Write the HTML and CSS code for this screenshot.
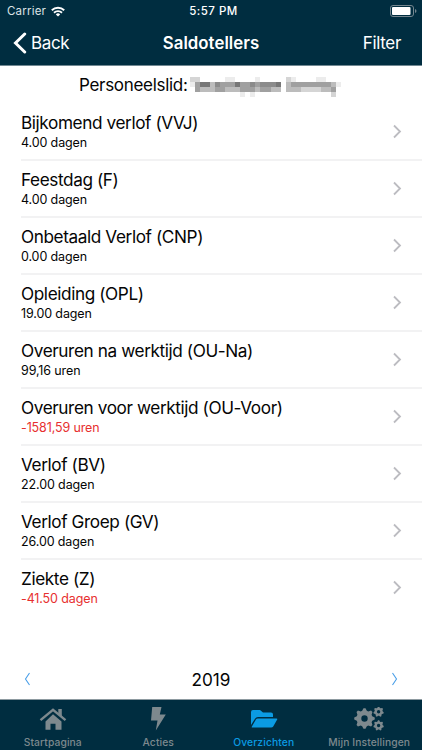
FILE: index.html
```html
<!DOCTYPE html>
<html lang="nl">
<head>
<meta charset="utf-8">
<title>Saldotellers</title>
<link rel="stylesheet" href="styles.css">
</head>
<body>
<header class="top">
  <div class="status">
    <div class="carrier"><span>Carrier</span>
      <svg width="14" height="11" viewBox="0 0 14 11"><g fill="none" stroke="#fff" stroke-width="1.9"><path d="M.8 4.2a9 9 0 0 1 12.4 0"/><path d="M3 6.7a5.8 5.8 0 0 1 8 0"/></g><path d="M7 10.6 4.8 8.4a3.2 3.2 0 0 1 4.4 0z" fill="#fff"/></svg>
    </div>
    <span class="clock">5:57 PM</span>
    <svg class="battery" width="27" height="12" viewBox="0 0 27 12"><rect x=".5" y=".5" width="23" height="11" rx="2.5" fill="none" stroke="#74868f"/><rect x="2" y="2" width="18.5" height="8" rx="1" fill="#fff"/><path d="M25 4v4q1.500-.6 1.500-2T25 4z" fill="#74868f"/></svg>
  </div>
  <nav class="bar">
    <a class="back"><svg width="14" height="22" viewBox="0 0 14 22"><path d="M11.700 2 2.500 11l9.200 9" fill="none" stroke="#fff" stroke-width="3" stroke-linecap="round" stroke-linejoin="miter"/></svg><span>Back</span></a>
    <h1>Saldotellers</h1>
    <a class="filter">Filter</a>
  </nav>
</header>
<main>
  <div class="person"><span class="label">Personeelslid:</span><svg class="mosaic" id="mosaic" width="156" height="20" viewBox="0 0 31 4" preserveAspectRatio="none" shape-rendering="crispEdges"></svg></div>
  <ul class="list" id="list"></ul>
  <div class="year">
    <svg width="7" height="14" viewBox="0 0 7 14"><path d="M5.500 1 1.500 7l4 6" fill="none" stroke="#4a9fe8" stroke-width="1.100"/></svg>
    <span>2019</span>
    <svg width="7" height="14" viewBox="0 0 7 14"><path d="M1.500 1l4 6-4 6" fill="none" stroke="#4a9fe8" stroke-width="1.100"/></svg>
  </div>
</main>
<footer class="tabs">
  <a class="tab"><svg width="28" height="24" viewBox="0 0 28 24"><path d="M14 7.300 22.500 14.500v8.200h-6v-6h-5v6h-5v-8.200z" fill="currentColor"/><path d="M1.500 13.200 14 2.800l12.500 10.400" fill="none" stroke="currentColor" stroke-width="2.400"/><path d="M19.300 2h3.500v8l-3.500-3z" fill="currentColor"/></svg><span>Startpagina</span></a>
  <a class="tab"><svg width="28" height="24" viewBox="0 0 28 24"><path d="M8.200 0h9.300l-1.700 7.500h6L11.800 23.500l1.700-10H7z" fill="currentColor"/></svg><span>Acties</span></a>
  <a class="tab active"><svg width="28" height="24" viewBox="0 0 28 24"><path d="M1 18V5q0-2 2-2h7l3 2.500h8q2 0 2 2V10H8q-2 0-3 1.700z" fill="currentColor"/><path d="M7.700 11.600h18.800q1.200 0 .7 1l-4 7q-.7 1-2 1H2.500q-1.200 0-.6-1l4-7q.6-1 1.800-1z" fill="currentColor"/></svg><span>Overzichten</span></a>
  <a class="tab"><svg width="30" height="24" viewBox="0 0 30 24" id="gears"></svg><span>Mijn Instellingen</span></a>
</footer>
<script src="app.js"></script>
</body>
</html>
```
FILE: styles.css
```css
* { box-sizing: border-box; }
body { margin: 0; width: 422px; height: 750px; display: flex; flex-direction: column; background: #fff; color: #050505; font-family: Inter, sans-serif; overflow: hidden; }
.top { height: 66px; background: #002d40; color: #fff; border-bottom: 1px solid #718892; flex: none; }
.status { height: 22px; display: grid; grid-template-columns: 1fr auto 1fr; align-items: center; padding: 0 5px 0 7px; }
.carrier { display: flex; align-items: center; gap: 5px; font-size: 11.5px; letter-spacing: .2px; color: #dbe2e5; }
.clock { font-size: 11.5px; font-weight: 500; letter-spacing: .5px; padding-left: 3px; }
.battery { justify-self: end; }
.bar { height: 42px; display: grid; grid-template-columns: 1fr auto 1fr; align-items: center; padding: 0 21px; font-size: 17px; letter-spacing: -.35px; }
.back { display: flex; align-items: center; gap: 4px; margin-left: -8px; }
h1 { margin: 0; font-size: 16.8px; font-weight: 600; letter-spacing: .05px; }
.filter { justify-self: end; }
main { flex: 1; display: flex; flex-direction: column; }
.person { display: flex; height: 38px; padding: 8px 0 0 79px; font-size: 17px; line-height: 23px; }
.label { width: 111px; letter-spacing: -.3px; }
.mosaic { margin: 3px 0 0; }
.list { margin: 0; padding: 0 0 0 21px; list-style: none; }
.row { height: 57px; border-bottom: 2px solid #f2f2f3; display: flex; justify-content: space-between; padding: 7px 20px 0 0; }
.name { font-size: 17.2px; line-height: 23px; letter-spacing: -.4px; white-space: nowrap; }
.value { font-size: 12.5px; line-height: 15px; letter-spacing: -.12px; margin-top: 1px; }
.negative { color: #e72f2f; }
.chev { margin-top: 13px; }
.row:last-child { border-bottom: 0; }
.year { margin-top: auto; height: 41px; display: flex; justify-content: space-between; padding: 0 24px; align-items: center; font-size: 17.2px; }
.year span { padding-top: 2px; }
.tabs { height: 51px; flex: none; border-top: 1px solid #8d9aa0; background: #002d40; display: grid; grid-template-columns: repeat(4, 1fr); color: #7d898e; }
.tab { display: flex; flex-direction: column; align-items: center; padding-top: 7px; font-size: 10.3px; font-weight: 500; line-height: 13px; gap: 5px; letter-spacing: .1px; white-space: nowrap; }
.active { color: #0b9be3; }
```
FILE: app.js
```js
const rows = [
  ["Bijkomend verlof (VVJ)", "4.00 dagen"], ["Feestdag (F)", "4.00 dagen"],
  ["Onbetaald Verlof (CNP)", "0.00 dagen"], ["Opleiding (OPL)", "19.00 dagen"],
  ["Overuren na werktijd (OU-Na)", "99,16 uren"], ["Overuren voor werktijd (OU-Voor)", "-1581,59 uren"],
  ["Verlof (BV)", "22.00 dagen"], ["Verlof Groep (GV)", "26.00 dagen"], ["Ziekte (Z)", "-41.50 dagen"]
];
document.getElementById("list").innerHTML = rows.map(([n, v]) =>
  `<li class="row"><div><div class="name">${n}</div><div class="value${v[0] === "-" ? " negative" : ""}">${v}</div></div><svg class="chev" width="10" height="15" viewBox="0 0 10 15"><path d="M2 1.500 8 7.500 2 13.500" fill="none" stroke="#bcbcc1" stroke-width="1.800"/></svg></li>`).join("");

function gear(cx, cy, r, hole, teeth) {
  let d = "";
  const n = teeth * 4;
  for (let i = 0; i < n; i++) {
    const a = (i - .5) / n * Math.PI * 2 - Math.PI / 2;
    const q = i % 4 < 2 ? r : r * .78;
    d += (i ? "L" : "M") + (cx + q * Math.cos(a)).toFixed(2) + " " + (cy + q * Math.sin(a)).toFixed(2);
  }
  return `<path fill="currentColor" fill-rule="evenodd" d="${d}ZM${cx - hole} ${cy}a${hole} ${hole} 0 1 0 ${2 * hole} 0a${hole} ${hole} 0 1 0 ${-2 * hole} 0Z"/>`;
}
document.getElementById("gears").innerHTML = gear(10.5, 11.5, 10.3, 3.2, 8) + gear(24.6, 4.8, 5.2, 1.7, 7) + gear(24.6, 18.5, 5.2, 1.7, 7);

const cells = [
  "2200000110000100000210000110000",
  "1466354446445455560344444444310",
  "0433344333444344330333222233400",
  "0000000000101000000000000000200"
];
const shades = ["", "#ececec", "#d5d5d5", "#bcbcbc", "#a0a0a0", "#8b8b8b", "#777"];
document.getElementById("mosaic").innerHTML = cells.map((line, y) => [...line].map((c, x) =>
  c === "0" ? "" : `<rect x="${x}" y="${y}" width="1" height="1" fill="${shades[c]}"/>`).join("")).join("");
```
